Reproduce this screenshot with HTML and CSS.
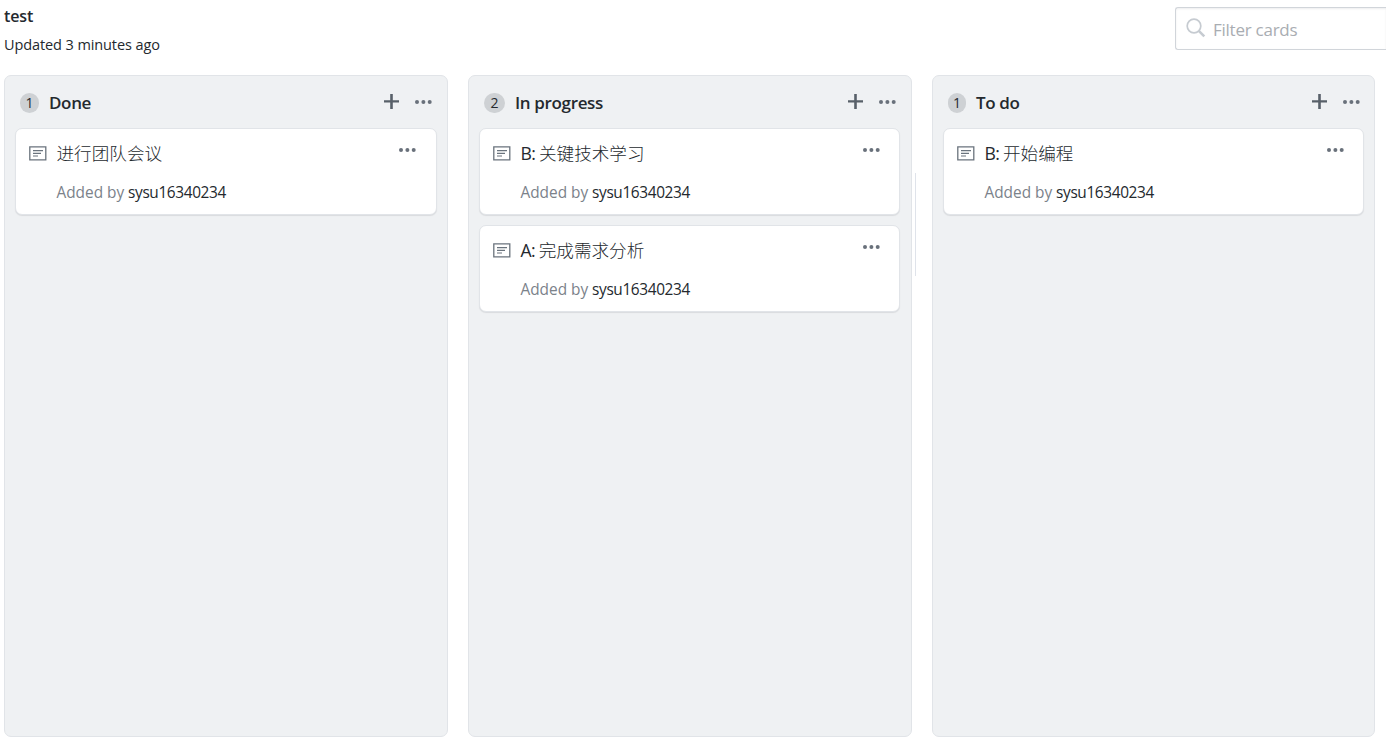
FILE: index.html
```html
<!DOCTYPE html>
<html lang="en">
<head>
<meta charset="utf-8">
<title>test</title>
<link rel="stylesheet" href="styles.css">
</head>
<body>
<svg class="sprite" aria-hidden="true">
  <symbol id="plus" viewBox="0 0 15 15"><path d="M6.2 0h2.6v6.2H15v2.4H8.800V15H6.200V8.600H0V6.200h6.200z"/></symbol>
  <symbol id="dots" viewBox="0 0 17 4"><circle cx="2" cy="2" r="2"/><circle cx="8.400" cy="2" r="2"/><circle cx="14.700" cy="2" r="2"/></symbol>
  <symbol id="note" viewBox="0 0 18 15"><path fill="none" stroke="currentColor" stroke-width="1.300" d="M.8.8h16v13H.8z"/><path fill="none" stroke="currentColor" stroke-width="1.200" d="M4 4.600h10M4 7.300h8M4 10h5"/></symbol>
  <symbol id="search" viewBox="0 0 20 20"><circle cx="8" cy="8" r="6.800" fill="none" stroke="currentColor" stroke-width="1.700"/><path d="M12.800 12.800l5.500 5.500" fill="none" stroke="currentColor" stroke-width="2.600"/></symbol>
</svg>
<header class="top">
  <div class="project">
    <h1 class="name">test</h1>
    <p class="updated">Updated 3 minutes ago</p>
  </div>
  <label class="filter"><svg class="search"><use href="#search"/></svg><span class="placeholder">Filter cards</span></label>
</header>
<main class="board">
  <section class="column">
    <div class="head"><span class="count">1</span><h2 class="title">Done</h2><svg class="plus"><use href="#plus"/></svg><svg class="dots"><use href="#dots"/></svg></div>
    <article class="card"><svg class="note"><use href="#note"/></svg><div class="body"><p class="text">进行团队会议</p><p class="by">Added by <b class="user">sysu16340234</b></p></div><svg class="dots"><use href="#dots"/></svg></article>
  </section>
  <section class="column middle">
    <div class="head"><span class="count wide">2</span><h2 class="title">In progress</h2><svg class="plus"><use href="#plus"/></svg><svg class="dots"><use href="#dots"/></svg></div>
    <article class="card"><svg class="note"><use href="#note"/></svg><div class="body"><p class="text"><span class="latin">B: </span>关键技术学习</p><p class="by">Added by <b class="user">sysu16340234</b></p></div><svg class="dots"><use href="#dots"/></svg></article>
    <article class="card"><svg class="note"><use href="#note"/></svg><div class="body"><p class="text"><span class="latin">A: </span>完成需求分析</p><p class="by">Added by <b class="user">sysu16340234</b></p></div><svg class="dots"><use href="#dots"/></svg></article>
  </section>
  <section class="column last">
    <div class="head"><span class="count narrow">1</span><h2 class="title">To do</h2><svg class="plus"><use href="#plus"/></svg><svg class="dots"><use href="#dots"/></svg></div>
    <article class="card"><svg class="note"><use href="#note"/></svg><div class="body"><p class="text"><span class="latin">B: </span>开始编程</p><p class="by">Added by <b class="user">sysu16340234</b></p></div><svg class="dots"><use href="#dots"/></svg></article>
  </section>
</main>
</body>
</html>
```
FILE: styles.css
```css
* { box-sizing: border-box; margin: 0; padding: 0; }
body {
  height: 748px;
  overflow: hidden;
  background: #fff;
  color: #24292e;
  font-family: "Open Sans", "Noto Sans CJK SC", sans-serif;
}
svg { display: block; flex: none; fill: currentColor; }
.sprite { display: none; }
.top { display: flex; justify-content: space-between; height: 75px; padding-left: 4px; }
.name { padding-top: 4px; font-size: 16px; line-height: 24px; font-weight: 600; letter-spacing: -.1px; }
.updated { padding-top: 5px; font-size: 14.500px; line-height: 24px; letter-spacing: -.1px; }
.filter {
  display: flex;
  width: 211px;
  height: 43px;
  margin-top: 7px;
  padding-left: 10px;
  border: 1px solid #d1d5da;
  border-right: 0;
  border-radius: 3px 0 0 3px;
  box-shadow: inset 0 1px 2px rgba(27, 31, 35, .075);
}
.search { width: 20px; height: 20px; margin-top: 10px; color: #c6cbd1; }
.placeholder { margin-left: 7px; color: #a9adb2; font-size: 17px; line-height: 43px; letter-spacing: -.25px; }
.board { display: grid; grid-template-columns: 444px 444px 443px; gap: 20px; height: 662px; padding-left: 4px; }
.column { border: 1px solid #e1e4e8; border-radius: 7px; background: #eff1f3; padding: 0 10px; }
.middle { position: relative; padding-right: 11px; }
.middle::after { content: ""; position: absolute; left: 446px; top: 97px; width: 1px; height: 103px; background: #dfe3ea; }
.head { display: flex; height: 52px; padding: 17px 5px 0 5px; color: #586069; }
.middle .head, .last .head { padding-right: 4px; }
.count { width: 19px; height: 20px; border-radius: 10px; background: #ced1d4; color: #24292e; font-size: 14px; line-height: 20px; text-align: center; }
.wide { width: 21px; }
.narrow { width: 18px; }
.title { flex: 1; margin-left: 10px; color: #24292e; font-size: 17px; line-height: 20px; font-weight: 600; letter-spacing: -.35px; }
.plus { width: 15px; height: 15px; margin: .5px 16px 0 0; }
.head .dots { margin-top: 6.500px; }
.dots { width: 17px; height: 4px; color: #69717b; }
.card {
  display: flex;
  height: 87px;
  margin-bottom: 10px;
  padding: 0 20px 0 13px;
  border: 1px solid #e1e4e8;
  border-radius: 7px;
  background: #fff;
  box-shadow: 0 1px 1px rgba(27, 31, 35, .1);
}
.middle .card { padding-right: 19px; }
.last .card { padding-right: 19px; }
.note { width: 18px; height: 15px; margin-top: 17px; color: #6a737d; }
.body { flex: 1; margin-left: 9.500px; }
.text { padding-top: 11px; font-family: "Noto Sans CJK SC", sans-serif; font-weight: 300; font-size: 17.600px; line-height: 26px; white-space: nowrap; }
.latin { font-family: "Open Sans", sans-serif; font-weight: 400; letter-spacing: -.7px; }
.by { padding-top: 15px; color: #7b828a; font-size: 15.400px; line-height: 24px; letter-spacing: -.02px; white-space: nowrap; }
.user { color: #24292e; font-weight: 400; letter-spacing: -.37px; }
.card .dots { margin-top: 18.500px; }
```
